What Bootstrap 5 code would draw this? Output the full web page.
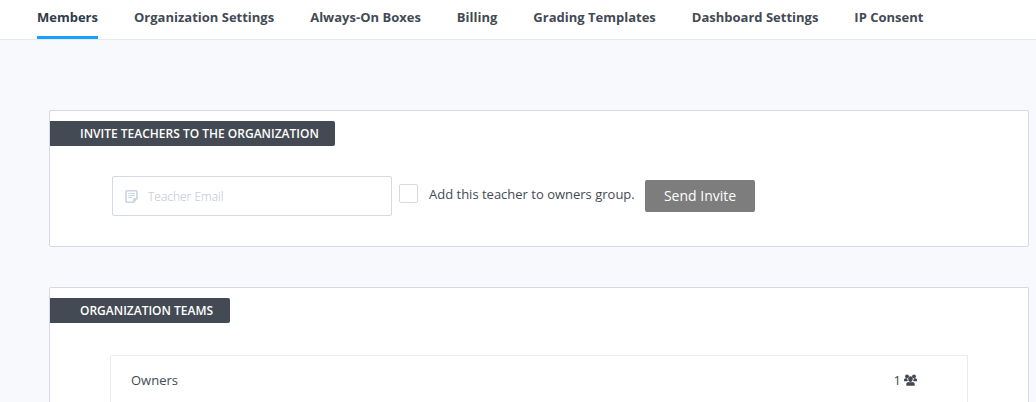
<!DOCTYPE html>
<html lang="en">
<head>
<meta charset="utf-8">
<meta name="viewport" content="width=device-width, initial-scale=1">
<title>Members</title>
<link href="https://cdn.jsdelivr.net/npm/bootstrap@5.3.0/dist/css/bootstrap.min.css" rel="stylesheet">
<style>
body{background:#f8f9fd;color:#434a54;font:13px/20px "Open Sans",sans-serif}
.org-nav{height:40px;padding-left:37px;gap:36px;border-bottom:1px solid #e6e9ed}
.org-nav .nav-link{padding:7px 0 9px;height:39px;font-weight:700;font-size:13px;line-height:20px;color:#434a54;white-space:nowrap;border-bottom:3px solid transparent}
.org-nav .nav-link.active{color:#2f3b4b;border-color:#1b9ffc}
.panel{width:980px;margin-left:49px;border:1px solid #d5d8e6;border-radius:2px;background:#fff}
.panel-invite{height:137px;margin-top:70px}
.panel-teams{height:115px;margin-top:40px;border-bottom:0;border-radius:2px 2px 0 0}
.panel-title{display:table;margin:10px 0 0;padding:0 16px 0 30px;height:25px;line-height:25px;background:#434a54;color:#fff;font-size:12px;font-weight:600;border-radius:0 2px 2px 0;white-space:nowrap}
.panel-teams .panel-title{padding-right:17px}
.invite-row{margin:30px 0 0 62px;height:40px}
.email-box{width:280px;height:40px;border:1px solid #d5d8e6;border-radius:2px;padding-left:12px;color:#b9c0cf;font-size:12px;font-weight:300}
.email-box svg{margin-right:10px}
.email-box span{padding-top:2px}
.form-check-input.owner-check{width:19px;height:19px;border:1px solid #d5d8e6;border-radius:2px;margin:-5px 0 0 7px}
.owner-label{margin:-4px 0 0 11px;width:216px;white-space:nowrap}
.btn-invite{width:110px;height:32px;padding:0;border:0;border-radius:2px;background:#7d7d7d;color:#fff;font-size:14px;font-weight:500;line-height:32px}
.team-row{margin:32px 60px 0;height:47px;border:1px solid #e9ebee;border-bottom:0;border-radius:2px 2px 0 0;padding:14px 50px 0 20px}
</style>
</head>
<body>
<nav class="nav org-nav bg-white flex-nowrap">
<a class="nav-link active" href="#">Members</a>
<a class="nav-link" href="#">Organization Settings</a>
<a class="nav-link" href="#">Always-On Boxes</a>
<a class="nav-link" href="#">Billing</a>
<a class="nav-link" href="#">Grading Templates</a>
<a class="nav-link" href="#">Dashboard Settings</a>
<a class="nav-link" href="#">IP Consent</a>
</nav>
<main>
<section class="panel panel-invite">
<h2 class="panel-title">INVITE TEACHERS TO THE ORGANIZATION</h2>
<div class="invite-row d-flex align-items-center">
<div class="email-box d-flex align-items-center"><svg width="13" height="13" viewBox="0 0 13 13" fill="none" stroke="#ccd3e2" stroke-width="1.6"><path d="M2 .8h9a1 1 0 0 1 1 1v6.700l-3.500 3.700H2a1 1 0 0 1-1-1V1.800a1 1 0 0 1 1-1z"/><path d="M12 8.300L8.300 12V8.300z" fill="#ccd3e2" stroke-width=".6"/><path d="M3.200 3.500h6.600M3.200 5.500h6.600M3.200 7.500h3.800" stroke-width="1"/></svg><span>Teacher Email</span></div>
<input class="form-check-input owner-check" type="checkbox" id="owner">
<label class="owner-label" for="owner">Add this teacher to owners group.</label>
<button class="btn btn-invite" type="button">Send Invite</button>
</div>
</section>
<section class="panel panel-teams">
<h2 class="panel-title">ORGANIZATION TEAMS</h2>
<div class="team-row d-flex justify-content-between align-items-start">
<span>Owners</span>
<span class="d-flex align-items-center"><span>1</span><svg style="margin-left:3px" width="13" height="12" viewBox="0 0 13 12" fill="#434a54"><circle cx="3" cy="2.300" r="1.900"/><circle cx="10" cy="2.300" r="1.900"/><path d="M0 7.200V5.800C0 4.700.8 4.200 2 4.200h1.200C3.200 5.500 3.500 6.200 4 6.700L3 7.200zM13 7.200V5.800C13 4.700 12.200 4.200 11 4.200H9.800C9.800 5.500 9.500 6.200 9 6.700L10 7.200z"/><ellipse cx="6.500" cy="4.900" rx="2.300" ry="2.600"/><path d="M5.600 7h1.800v1.500H5.600z"/><path d="M2.300 11.700V10C2.300 8.600 3.200 7.900 4.600 7.900L6.500 8.400 8.400 7.900C9.800 7.900 10.700 8.600 10.700 10V11.700z"/></svg></span>
</div>
</section>
</main>
<script src="https://cdn.jsdelivr.net/npm/bootstrap@5.3.0/dist/js/bootstrap.bundle.min.js"></script>
</body>
</html>
